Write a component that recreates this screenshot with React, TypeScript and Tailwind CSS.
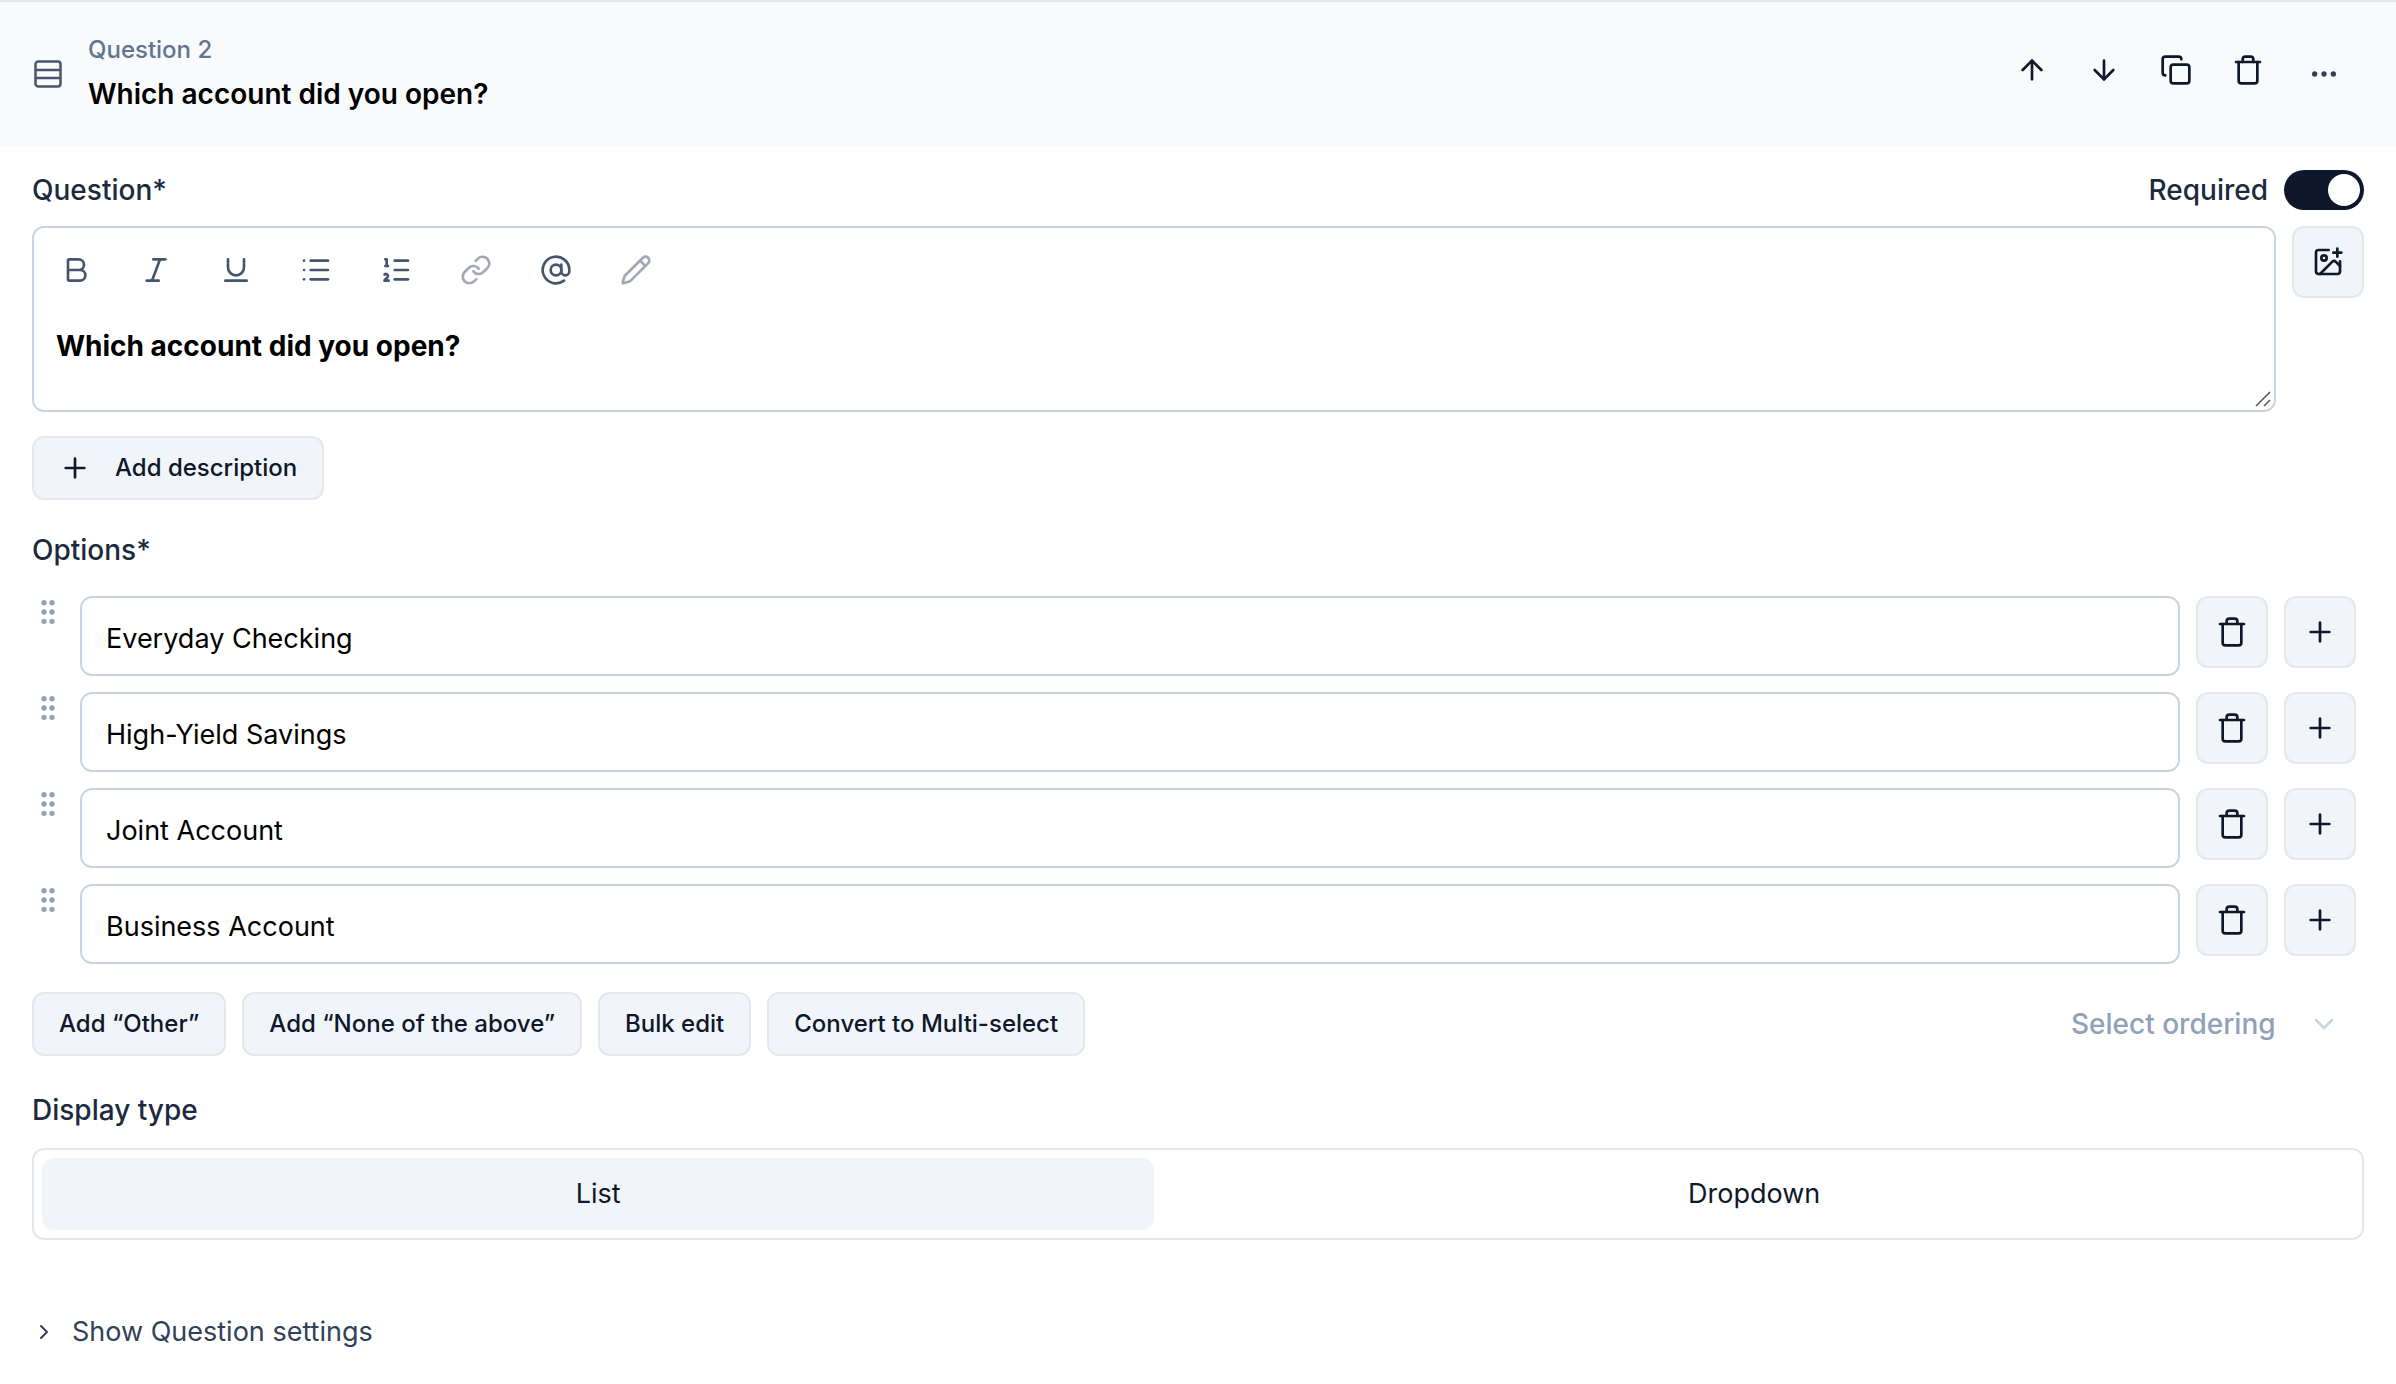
import { useState, type ReactNode } from "react";
import {
  ArrowDown,
  ArrowUp,
  AtSign,
  Bold,
  ChevronDown,
  ChevronRight,
  Copy,
  Ellipsis,
  GripVertical,
  ImagePlus,
  Italic,
  Link,
  List,
  ListOrdered,
  Pencil,
  Plus,
  Trash,
  Underline,
} from "lucide-react";

const initialOptions = [
  "Everyday Checking",
  "High-Yield Savings",
  "Joint Account",
  "Business Account",
];

const tools = [
  { label: "Bold", Icon: Bold, muted: false },
  { label: "Italic", Icon: Italic, muted: false },
  { label: "Underline", Icon: Underline, muted: false },
  { label: "Bulleted list", Icon: List, muted: false },
  { label: "Numbered list", Icon: ListOrdered, muted: false },
  { label: "Link", Icon: Link, muted: true },
  { label: "Mention", Icon: AtSign, muted: false },
  { label: "Edit", Icon: Pencil, muted: true },
];

const headerActions = [
  { label: "Move up", Icon: ArrowUp },
  { label: "Move down", Icon: ArrowDown },
  { label: "Duplicate", Icon: Copy },
  { label: "Delete question", Icon: Trash },
];

const optionActions = ["Add “Other”", "Add “None of the above”", "Bulk edit", "Convert to Multi-select"];

function RowsIcon() {
  return (
    <svg viewBox="0 0 32 32" className="size-8 text-slate-600" fill="none" stroke="currentColor" strokeWidth="2.5" aria-hidden="true">
      <rect x="3.5" y="3.5" width="25" height="25" rx="2.7" />
      <path d="M4 12h24M4 20h24" />
    </svg>
  );
}

function SquareButton({ label, children }: { label: string; children: ReactNode }) {
  return (
    <button
      type="button"
      aria-label={label}
      className="flex size-18 shrink-0 items-center justify-center rounded-xl border-2 border-gray-200 bg-slate-100 text-slate-900"
    >
      {children}
    </button>
  );
}

function TextButton({ children }: { children: ReactNode }) {
  return (
    <button
      type="button"
      className="flex h-16 items-center gap-6 rounded-xl border-2 border-gray-200 bg-slate-100 px-[25px] text-2xl font-medium text-slate-900"
    >
      {children}
    </button>
  );
}

export default function App() {
  const [question, setQuestion] = useState("Which account did you open?");
  const [options, setOptions] = useState(initialOptions);
  const [required, setRequired] = useState(true);
  const [display, setDisplay] = useState("List");

  return (
    <main className="min-h-screen bg-white font-[Inter,sans-serif] text-[28px] leading-9 text-slate-900">
      <header className="flex h-[146px] items-center border-t-2 border-slate-200 bg-[#f9fafc] px-8">
        <RowsIcon />
        <div className="ml-6 flex flex-1 flex-col gap-2 pb-1">
          <p className="text-2xl leading-9 font-medium text-slate-500">Question 2</p>
          <h1 className="font-semibold text-black">Which account did you open?</h1>
        </div>
        <div className="flex pb-2">
          {headerActions.map(({ label, Icon }) => (
            <button key={label} type="button" aria-label={label} className="flex size-18 items-center justify-center">
              <Icon className="size-8" />
            </button>
          ))}
        </div>
        <button type="button" aria-label="More actions" className="flex h-18 w-20 items-center justify-center text-slate-700">
          <Ellipsis className="size-8" />
        </button>
      </header>

      <div className="px-8 pt-6">
        <div className="flex h-10 items-center justify-between font-medium text-slate-800">
          <label htmlFor="question">Question*</label>
          <label className="relative flex items-center gap-4">
            Required
            <input
              type="checkbox"
              role="switch"
              checked={required}
              onChange={(e) => setRequired(e.target.checked)}
              className="peer sr-only"
            />
            <span className="flex h-10 w-20 rounded-full bg-slate-300 p-1 peer-checked:justify-end peer-checked:bg-slate-900">
              <span className="size-8 rounded-full bg-white" />
            </span>
          </label>
        </div>

        <div className="mt-4 flex items-start gap-4">
          <div className="relative flex-1 rounded-xl border-2 border-slate-300">
            <div className="flex gap-12 px-[26px] pt-[26px]">
              {tools.map(({ label, Icon, muted }) => (
                <button
                  key={label}
                  type="button"
                  aria-label={label}
                  className={muted ? "text-[#a3a8b4]" : "text-slate-600"}
                >
                  <Icon className="size-8" />
                </button>
              ))}
            </div>
            <textarea
              id="question"
              value={question}
              onChange={(e) => setQuestion(e.target.value)}
              className="mt-6 block h-25 w-full resize-none px-[22px] py-[18px] font-bold text-black outline-none"
            />
            <svg viewBox="0 0 16 16" className="absolute right-[3px] bottom-[3px] size-4 text-neutral-600" fill="none" stroke="currentColor" strokeWidth="1.5" aria-hidden="true">
              <path d="M1 15 15 1M9 15l6-6" />
            </svg>
          </div>
          <SquareButton label="Add image">
            <ImagePlus className="size-8" />
          </SquareButton>
        </div>

        <div className="mt-6 flex">
          <TextButton>
            <Plus className="size-8" />
            Add description
          </TextButton>
        </div>

        <h2 className="mt-8 mb-7 font-medium text-slate-800">Options*</h2>
        <ul className="flex flex-col gap-4 pr-2">
          {options.map((option, index) => (
            <li key={index} className="flex items-start gap-4">
              <button type="button" aria-label="Reorder option" className="text-slate-400">
                <GripVertical className="size-8" />
              </button>
              <input
                type="text"
                aria-label={`Option ${index + 1}`}
                value={option}
                onChange={(e) => setOptions(options.map((o, i) => (i === index ? e.target.value : o)))}
                className="h-20 min-w-0 flex-1 rounded-xl border-2 border-slate-300 bg-white px-6 pt-1 text-[27px] text-black outline-none"
              />
              <SquareButton label="Delete option">
                <Trash className="size-8" />
              </SquareButton>
              <SquareButton label="Add option below">
                <Plus className="size-8" />
              </SquareButton>
            </li>
          ))}
        </ul>

        <div className="mt-7 flex items-center gap-4">
          {optionActions.map((label) => (
            <TextButton key={label}>{label}</TextButton>
          ))}
          <div className="relative ml-auto flex items-center">
            <select
              aria-label="Ordering"
              className="h-16 appearance-none rounded-xl bg-white pr-22 pl-6 font-medium text-slate-400 outline-none"
            >
              <option>Select ordering</option>
            </select>
            <ChevronDown className="pointer-events-none absolute right-6 size-8 text-slate-300" />
          </div>
        </div>

        <fieldset className="mt-9">
          <legend className="mb-5 font-medium text-slate-800">Display type</legend>
          <div className="flex rounded-xl border-2 border-gray-200 p-2 text-[27px]">
            {["List", "Dropdown"].map((type) => (
              <label
                key={type}
                className="relative flex h-18 flex-auto items-center justify-center rounded-xl has-checked:bg-slate-100"
              >
                <input
                  type="radio"
                  name="display-type"
                  checked={display === type}
                  onChange={() => setDisplay(type)}
                  className="sr-only"
                />
                {type}
              </label>
            ))}
          </div>
        </fieldset>

        <button type="button" className="mt-[74px] flex items-center gap-4 text-[27px] text-slate-700">
          <ChevronRight className="size-6" />
          Show Question settings
        </button>
      </div>
    </main>
  );
}
